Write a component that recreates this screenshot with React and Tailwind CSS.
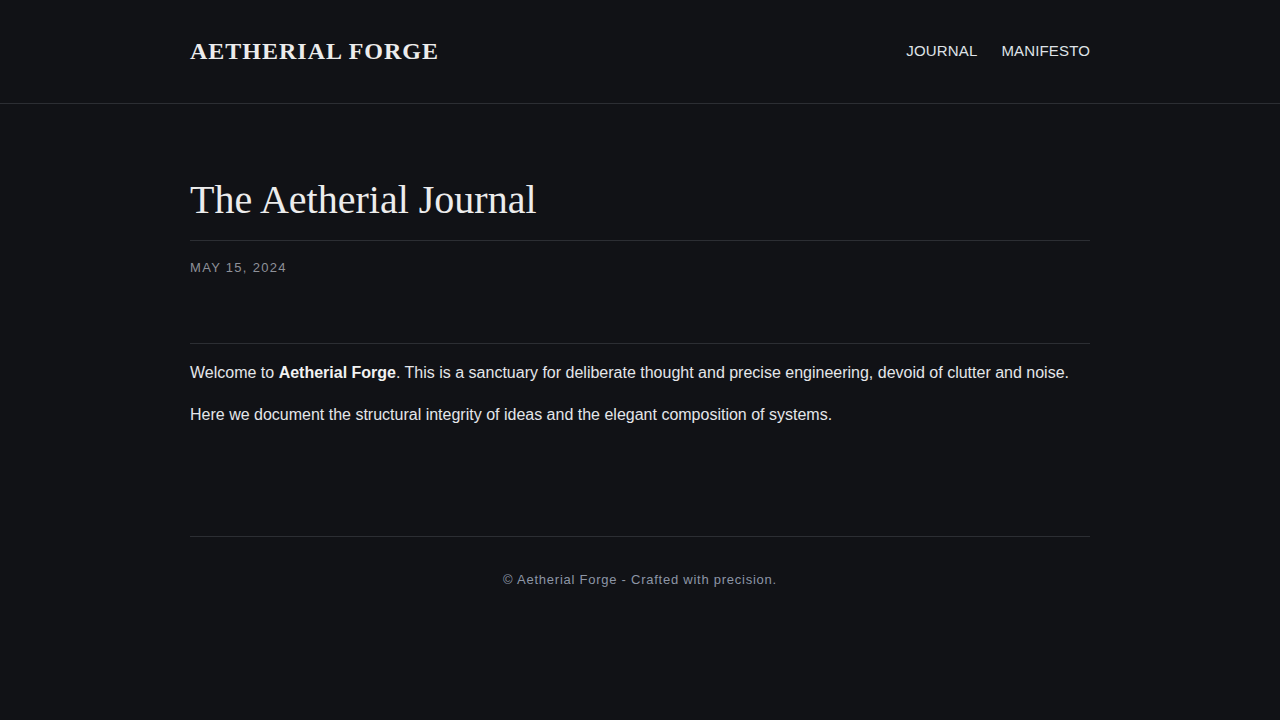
const App = () => {
  return (
    <div className="min-h-screen bg-[#111216] text-[#e4e6ea]" style={{ fontFamily: '"Liberation Sans", Arial, sans-serif' }}>
      {/* Header */}
      <header className="h-[104px] border-b border-[#2c2e33]">
        <div className="mx-auto flex h-full w-[900px] items-center justify-between">
          <a href="#" className="pb-0.5 font-['Liberation_Serif',serif] text-[24px] font-bold tracking-[1px] text-[#ececec]">
            AETHERIAL FORGE
          </a>
          <nav className="flex items-center gap-6 text-[15px] tracking-[0.15px] text-[#dfe2e7]">
            <a href="#">JOURNAL</a>
            <a href="#">MANIFESTO</a>
          </nav>
        </div>
      </header>

      {/* Main */}
      <main className="mx-auto w-[900px]">
        <div className="mt-[72px] border-b border-[#2c2e33] pb-4">
          <h1 className="font-['Liberation_Serif',serif] text-[40px] leading-[1.2] text-[#ececec]">
            The Aetherial Journal
          </h1>
        </div>
        <div className="mt-[17px] pb-[65px] text-[13px] leading-5 tracking-[1.3px] text-[#8e9199]">
          MAY 15, 2024
        </div>

        <article className="border-t border-[#2c2e33] pt-4 text-[16px] leading-[1.6] text-[#e4e6ea]">
          <p className="mb-4">
            Welcome to <strong className="font-bold text-[#f2f2f2]">Aetherial Forge</strong>. This is a sanctuary for deliberate thought and precise engineering, devoid of clutter and noise.
          </p>
          <p className="mb-4">
            Here we document the structural integrity of ideas and the elegant composition of systems.
          </p>
        </article>

        {/* Footer */}
        <footer className="mt-[109px] border-t border-[#2c2e33] pt-[33px] text-center text-[13px] leading-5 tracking-[0.75px] text-[#8d96a6]">
          © Aetherial Forge - Crafted with precision.
        </footer>
      </main>
    </div>
  );
};

export default App;
